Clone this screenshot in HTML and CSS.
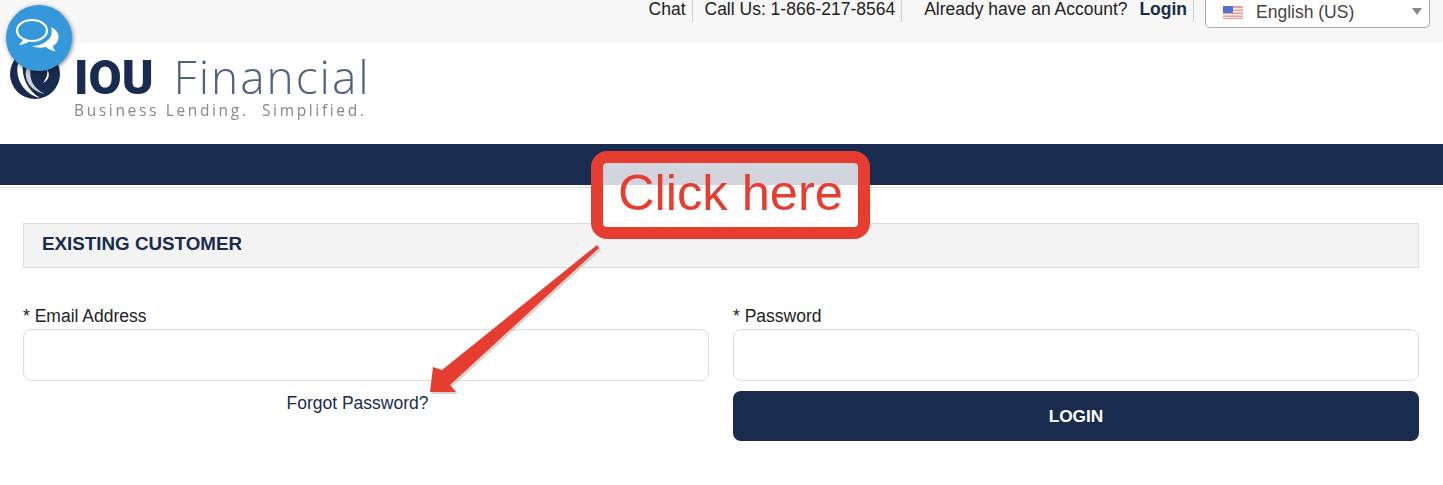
FILE: index.html
```html
<!DOCTYPE html>
<html lang="en">
<head>
    <meta charset="UTF-8">
    <meta name="viewport" content="width=device-width, initial-scale=1.0">
    <title>IOU Financial - Login</title>
    <link rel="stylesheet" href="styles.css">
</head>
<body>
    <div class="top-bar">
        <a class="top-link top-cell" href="#">Chat</a>
        <span class="top-cell">Call Us: 1-866-217-8564</span>
        <span class="top-cell account-cell">Already have an Account? <a class="login-link" href="#">Login</a></span>
        <div class="lang-select">
            <svg class="flag" viewBox="0 0 20 13" width="20" height="13">
                <rect width="20" height="13" fill="#e8a09a"/>
                <rect y="2" width="20" height="1.5" fill="#f7e9e6"/>
                <rect y="5" width="20" height="1.5" fill="#f7e9e6"/>
                <rect y="8" width="20" height="1.5" fill="#f7e9e6"/>
                <rect y="11" width="20" height="1" fill="#f7e9e6"/>
                <rect width="10" height="7" fill="#4f74d0"/>
            </svg>
            <span class="lang-name">English (US)</span>
            <span class="lang-caret"></span>
        </div>
    </div>

    <div class="logo-row">
        <div class="logo">
            <svg class="logo-mark" viewBox="0 0 50 50" width="50" height="50">
                <circle cx="25" cy="25" r="25" fill="#1a2b50"/>
                <path d="M9 12C4 24 10 44 30 49C18 42 11 28 13 14Z" fill="#fff"/>
                <path d="M18 16C12 26 18 42 35 45C24 40 18 30 21 18Z" fill="#c9d0dc"/>
                <path d="M37 20C41 26 38 32 33 34C36 30 38 26 37 20Z" fill="#fff"/>
            </svg>
            <div class="logo-text">
                <div class="logo-name"><b>IOU</b><span>Financial</span></div>
                <div class="logo-tag">Business Lending.&nbsp; Simplified.</div>
            </div>
        </div>
    </div>

    <div class="nav-bar"></div>
    <div class="nav-line"></div>

    <div class="content">
        <h2 class="section-title">EXISTING CUSTOMER</h2>
        <form class="login-form">
            <div class="form-col">
                <label for="email">* Email Address</label>
                <input type="text" id="email">
                <a class="forgot" href="#">Forgot Password?</a>
            </div>
            <div class="form-col">
                <label for="password">* Password</label>
                <input type="password" id="password">
                <button type="button" class="login-btn">LOGIN</button>
            </div>
        </form>
    </div>

    <!-- chat bubble and tutorial annotation sit over the page -->
    <div class="chat-bubble">
        <svg viewBox="0 0 66 66" width="66" height="66">
            <path d="M45 22C51 25 54 30 52 35C51 38 49 40 47 41C47 43 48 45 50 46.5C46 46 42 44 40 42C35 43 30 43 26 41C34 41 42 37 45 31C46 28 46 25 45 22Z" fill="#fff"/>
            <ellipse cx="26" cy="25.5" rx="15" ry="10.5" fill="none" stroke="#fff" stroke-width="2.2"/>
            <path d="M17 33C17 36 15 38 12.500 40C16 40 20 38.500 23 36.500Z" fill="#fff"/>
        </svg>
    </div>

    <div class="callout">Click here</div>
    <svg class="callout-arrow" width="190" height="170" viewBox="0 0 190 170">
        <path d="M169 5L171 8L22 145L28 152L2 152L5 127L14 130Z" fill="#aaa" transform="translate(2 2)" opacity="0.5"/>
        <path d="M169 5L171 8L22 145L28 152L2 152L5 127L14 130Z" fill="#e63d31"/>
    </svg>
</body>
</html>
```

FILE: styles.css
```css
body {
    font-family: "Liberation Sans", Arial, sans-serif;
    margin: 0;
    background-color: #fff;
    color: #222;
    font-size: 17.5px;
}

a {
    color: inherit;
    text-decoration: none;
}

.top-bar {
    display: flex;
    justify-content: flex-end;
    align-items: flex-start;
    height: 43px;
    padding-right: 13px;
    background-color: #f7f7f7;
}

.top-cell {
    height: 22px;
    line-height: 19px;
    padding: 0 6px 0 12px;
    border-right: 1px solid #ccc;
}

.top-link {
    padding-left: 0;
}

.account-cell {
    padding-left: 22px;
}

.login-link {
    margin-left: 7px;
    font-weight: bold;
    color: #1a2b50;
}

.lang-select {
    display: flex;
    align-items: center;
    width: 225px;
    height: 28px;
    margin-left: 11px;
    padding-bottom: 2px;
    box-sizing: border-box;
    background: #fff;
    border: 1px solid #aaa;
    border-top: none;
    border-radius: 0 0 5px 5px;
    position: relative;
}

.flag {
    margin-left: 17px;
}

.lang-name {
    margin-left: 13px;
    color: #444;
}

.lang-caret {
    position: absolute;
    right: 7px;
    top: 8px;
    border-left: 5px solid transparent;
    border-right: 5px solid transparent;
    border-top: 7px solid #888;
}

.logo-row {
    height: 101px;
    padding-left: 10px;
    box-sizing: border-box;
}

.logo {
    display: flex;
    align-items: flex-start;
    padding-top: 6px;
    filter: blur(0.4px);
}

.logo-text {
    margin-left: 14px;
    width: 300px;
}

.logo-name {
    display: flex;
    align-items: baseline;
    height: 48px;
    padding-top: 4px;
    line-height: 46px;
    white-space: nowrap;
}

.logo-name b {
    font-family: Roboto, sans-serif;
    color: #1a2b50;
    font-size: 48px;
    font-weight: 900;
}

.logo-name span {
    margin-left: 20px;
    font-family: "Open Sans", sans-serif;
    color: #50627c;
    font-weight: 300;
    font-size: 46px;
    letter-spacing: 2px;
}

.logo-tag {
    font-family: "Open Sans", sans-serif;
    font-size: 15.5px;
    line-height: 18px;
    letter-spacing: 2.65px;
    color: #888;
    white-space: nowrap;
}

.nav-bar {
    height: 41px;
    background-color: #1a2b50;
}

.nav-line {
    height: 1px;
    margin-top: 2px;
    background-color: #e3e3e3;
}

.content {
    padding: 35px 24px 0 23px;
}

.section-title {
    margin: 0;
    height: 45px;
    line-height: 40px;
    padding-left: 18px;
    box-sizing: border-box;
    font-size: 18.8px;
    font-weight: bold;
    color: #1a2b50;
    background-color: #f3f3f3;
    border: 1px solid #ddd;
}

.login-form {
    display: grid;
    grid-template-columns: 1fr 1fr;
    gap: 24px;
    margin-top: 37px;
}

.form-col {
    display: flex;
    flex-direction: column;
}

.form-col label {
    height: 24px;
    line-height: 23px;
}

.form-col input {
    height: 52px;
    box-sizing: border-box;
    padding: 10px;
    border: 1px solid #ddd;
    border-radius: 8px;
    box-shadow: inset 0 1px 3px rgba(0, 0, 0, 0.04);
    outline: none;
}

.forgot {
    margin-top: 12px;
    padding-right: 17px;
    text-align: center;
    line-height: 20px;
    color: #1a2b50;
}

.login-btn {
    height: 50px;
    margin-top: 10px;
    border: none;
    border-radius: 8px;
    background-color: #1a2b50;
    color: #fff;
    font-family: inherit;
    font-size: 17.3px;
    font-weight: bold;
}

.chat-bubble {
    position: absolute;
    left: 6px;
    top: 5px;
    width: 66px;
    height: 66px;
    border-radius: 50%;
    background-color: #3498db;
    box-shadow: 1px 1px 4px rgba(0, 0, 0, 0.5);
}

.callout {
    position: absolute;
    left: 591px;
    top: 151px;
    width: 279px;
    height: 88px;
    box-sizing: border-box;
    border: 12px solid #e63d31;
    border-radius: 16px;
    background-color: rgba(255, 255, 255, 0.8);
    color: #e63d31;
    font-size: 50.6px;
    line-height: 60px;
    text-align: center;
}

.callout-arrow {
    position: absolute;
    left: 428px;
    top: 240px;
}
```
